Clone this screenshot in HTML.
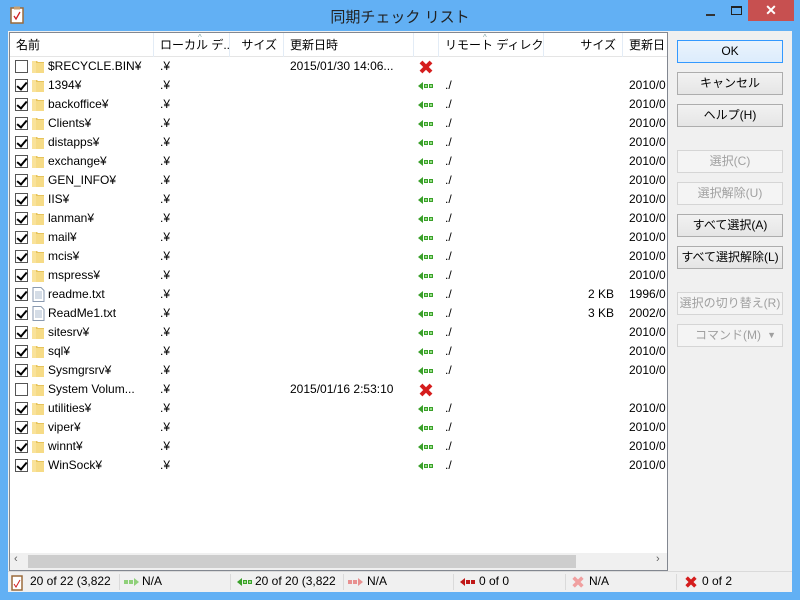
<!DOCTYPE html>
<html><head><meta charset="utf-8"><style>
*{margin:0;padding:0;box-sizing:border-box}
body{width:800px;height:600px;overflow:hidden;background:#62b0f4;font-family:"Liberation Sans","Noto Sans CJK JP",sans-serif;font-size:12px;color:#000;position:relative}
.a{position:absolute;white-space:nowrap}
#client{position:absolute;left:8px;top:31px;width:784px;height:561px;background:#f0f0f0}
#list{position:absolute;left:9px;top:32px;width:659px;height:539px;background:#fff;border:1px solid #828790;overflow:hidden}
.h{position:absolute;top:0;height:24px;line-height:24px;border-right:1px solid #e3ecf6;padding:0 6px;color:#000;white-space:nowrap;overflow:hidden}
.r{position:absolute;left:0;width:659px;height:19px;line-height:19px;white-space:nowrap}
.r span{position:absolute;top:0}
.cb{position:absolute;left:5px;top:3px;width:13px;height:13px;border:1px solid #555;background:#fff}
.cb.k::after{content:"";position:absolute;left:3px;top:0px;width:4px;height:8px;border:solid #000;border-width:0 2px 2px 0;transform:rotate(40deg)}
.fd{position:absolute;left:21px;top:2px;width:15px;height:15px}
.btn{position:absolute;left:677px;width:106px;height:23px;border:1px solid #adadad;background:linear-gradient(#f2f2f2,#e5e5e5);text-align:center;line-height:21px;color:#000;white-space:nowrap}
.btn.d{color:#a0a0a0;border-color:#d5d5d5;background:#f4f4f4}
.st{position:absolute;top:572px;height:19px;line-height:19px;white-space:nowrap}
.sep{position:absolute;top:574px;width:1px;height:16px;background:#dadada}
</style></head><body>
<svg class="a" style="left:10px;top:6px" width="14" height="18" viewBox="0 0 14 18"><rect x="1" y="2" width="12" height="15" fill="#fff" stroke="#9a6a3a" stroke-width="1.5"/><rect x="4" y="0.5" width="6" height="3" fill="#c8a070"/><path d="M4 10 L6 13 L10 6" stroke="#d02020" fill="none" stroke-width="1.3"/></svg>
<div class="a" style="left:0;top:6px;width:800px;text-align:center;font-size:15px;color:#222">同期チェック リスト</div>
<div class="a" style="left:706px;top:14px;width:9px;height:2px;background:#333"></div>
<div class="a" style="left:731px;top:6px;width:11px;height:9px;border:1px solid #222;border-top-width:2px"></div>
<div class="a" style="left:748px;top:0;width:46px;height:21px;background:#c75050;color:#fff;text-align:center;line-height:20px;font-size:14px;font-weight:bold">✕</div>
<div id="client"></div>
<div id="list">
<div class="a" style="left:0;top:0;width:659px;height:24px;border-bottom:1px solid #e5e5e5"></div>
<div class="h" style="left:0;width:144px">名前</div>
<div class="h" style="left:144px;width:76px">ローカル デ...</div>
<div class="h" style="left:220px;width:54px;text-align:right">サイズ</div>
<div class="h" style="left:274px;width:130px">更新日時</div>
<div class="h" style="left:404px;width:25px"></div>
<div class="h" style="left:429px;width:105px">リモート ディレクトリ</div>
<div class="h" style="left:534px;width:79px;text-align:right">サイズ</div>
<div class="h" style="left:613px;width:60px">更新日</div>
<div class="a" style="left:188px;top:0;font-size:8px;color:#8aa">^</div>
<div class="a" style="left:473px;top:0;font-size:8px;color:#8aa">^</div>
<svg width="0" height="0" style="position:absolute"><defs>
<symbol id="f" viewBox="0 0 15 15"><path d="M1 2h5l1 1h6v11H1z" fill="#e6c35c"/><rect x="2" y="4" width="11" height="10" fill="#f6db86"/><rect x="1" y="2" width="4" height="12" fill="#f9e29a"/></symbol>
<symbol id="t" viewBox="0 0 15 15"><path d="M2 0.5h8l3 3v11H2z" fill="#fff" stroke="#8a9ab0"/><path d="M4 5h7M4 7h7M4 9h7M4 11h7" stroke="#a8b8cc"/></symbol>
<symbol id="g" viewBox="0 0 16 8"><path d="M0 4L5 0V8Z" fill="#3aa02a"/><rect x="6" y="2" width="4" height="4" fill="#3aa02a"/><rect x="11" y="2" width="4" height="4" fill="#3aa02a"/><rect x="7" y="3" width="2" height="2" fill="#9be08a"/><rect x="12" y="3" width="2" height="2" fill="#9be08a"/></symbol>
<symbol id="x" viewBox="0 0 16 16"><path d="M3 3L13 13M13 3L3 13" stroke="#d51d1d" stroke-width="4"/></symbol>
</defs></svg>

<div class="r" style="top:24px"><i class="cb"></i><svg class="fd"><use href="#f"/></svg><span style="left:38px">$RECYCLE.BIN¥</span><span style="left:150px">.¥</span><span style="left:280px">2015/01/30 14:06...</span><svg class="a" style="left:408px;top:2px" width="16" height="16"><use href="#x"/></svg></div>
<div class="r" style="top:43px"><i class="cb k"></i><svg class="fd"><use href="#f"/></svg><span style="left:38px">1394¥</span><span style="left:150px">.¥</span><svg class="a" style="left:408px;top:6px" width="16" height="8"><use href="#g"/></svg><span style="left:435px">./</span><span style="left:619px">2010/0</span></div>
<div class="r" style="top:62px"><i class="cb k"></i><svg class="fd"><use href="#f"/></svg><span style="left:38px">backoffice¥</span><span style="left:150px">.¥</span><svg class="a" style="left:408px;top:6px" width="16" height="8"><use href="#g"/></svg><span style="left:435px">./</span><span style="left:619px">2010/0</span></div>
<div class="r" style="top:81px"><i class="cb k"></i><svg class="fd"><use href="#f"/></svg><span style="left:38px">Clients¥</span><span style="left:150px">.¥</span><svg class="a" style="left:408px;top:6px" width="16" height="8"><use href="#g"/></svg><span style="left:435px">./</span><span style="left:619px">2010/0</span></div>
<div class="r" style="top:100px"><i class="cb k"></i><svg class="fd"><use href="#f"/></svg><span style="left:38px">distapps¥</span><span style="left:150px">.¥</span><svg class="a" style="left:408px;top:6px" width="16" height="8"><use href="#g"/></svg><span style="left:435px">./</span><span style="left:619px">2010/0</span></div>
<div class="r" style="top:119px"><i class="cb k"></i><svg class="fd"><use href="#f"/></svg><span style="left:38px">exchange¥</span><span style="left:150px">.¥</span><svg class="a" style="left:408px;top:6px" width="16" height="8"><use href="#g"/></svg><span style="left:435px">./</span><span style="left:619px">2010/0</span></div>
<div class="r" style="top:138px"><i class="cb k"></i><svg class="fd"><use href="#f"/></svg><span style="left:38px">GEN_INFO¥</span><span style="left:150px">.¥</span><svg class="a" style="left:408px;top:6px" width="16" height="8"><use href="#g"/></svg><span style="left:435px">./</span><span style="left:619px">2010/0</span></div>
<div class="r" style="top:157px"><i class="cb k"></i><svg class="fd"><use href="#f"/></svg><span style="left:38px">IIS¥</span><span style="left:150px">.¥</span><svg class="a" style="left:408px;top:6px" width="16" height="8"><use href="#g"/></svg><span style="left:435px">./</span><span style="left:619px">2010/0</span></div>
<div class="r" style="top:176px"><i class="cb k"></i><svg class="fd"><use href="#f"/></svg><span style="left:38px">lanman¥</span><span style="left:150px">.¥</span><svg class="a" style="left:408px;top:6px" width="16" height="8"><use href="#g"/></svg><span style="left:435px">./</span><span style="left:619px">2010/0</span></div>
<div class="r" style="top:195px"><i class="cb k"></i><svg class="fd"><use href="#f"/></svg><span style="left:38px">mail¥</span><span style="left:150px">.¥</span><svg class="a" style="left:408px;top:6px" width="16" height="8"><use href="#g"/></svg><span style="left:435px">./</span><span style="left:619px">2010/0</span></div>
<div class="r" style="top:214px"><i class="cb k"></i><svg class="fd"><use href="#f"/></svg><span style="left:38px">mcis¥</span><span style="left:150px">.¥</span><svg class="a" style="left:408px;top:6px" width="16" height="8"><use href="#g"/></svg><span style="left:435px">./</span><span style="left:619px">2010/0</span></div>
<div class="r" style="top:233px"><i class="cb k"></i><svg class="fd"><use href="#f"/></svg><span style="left:38px">mspress¥</span><span style="left:150px">.¥</span><svg class="a" style="left:408px;top:6px" width="16" height="8"><use href="#g"/></svg><span style="left:435px">./</span><span style="left:619px">2010/0</span></div>
<div class="r" style="top:252px"><i class="cb k"></i><svg class="fd"><use href="#t"/></svg><span style="left:38px">readme.txt</span><span style="left:150px">.¥</span><svg class="a" style="left:408px;top:6px" width="16" height="8"><use href="#g"/></svg><span style="left:435px">./</span><span style="left:578px">2 KB</span><span style="left:619px">1996/0</span></div>
<div class="r" style="top:271px"><i class="cb k"></i><svg class="fd"><use href="#t"/></svg><span style="left:38px">ReadMe1.txt</span><span style="left:150px">.¥</span><svg class="a" style="left:408px;top:6px" width="16" height="8"><use href="#g"/></svg><span style="left:435px">./</span><span style="left:578px">3 KB</span><span style="left:619px">2002/0</span></div>
<div class="r" style="top:290px"><i class="cb k"></i><svg class="fd"><use href="#f"/></svg><span style="left:38px">sitesrv¥</span><span style="left:150px">.¥</span><svg class="a" style="left:408px;top:6px" width="16" height="8"><use href="#g"/></svg><span style="left:435px">./</span><span style="left:619px">2010/0</span></div>
<div class="r" style="top:309px"><i class="cb k"></i><svg class="fd"><use href="#f"/></svg><span style="left:38px">sql¥</span><span style="left:150px">.¥</span><svg class="a" style="left:408px;top:6px" width="16" height="8"><use href="#g"/></svg><span style="left:435px">./</span><span style="left:619px">2010/0</span></div>
<div class="r" style="top:328px"><i class="cb k"></i><svg class="fd"><use href="#f"/></svg><span style="left:38px">Sysmgrsrv¥</span><span style="left:150px">.¥</span><svg class="a" style="left:408px;top:6px" width="16" height="8"><use href="#g"/></svg><span style="left:435px">./</span><span style="left:619px">2010/0</span></div>
<div class="r" style="top:347px"><i class="cb"></i><svg class="fd"><use href="#f"/></svg><span style="left:38px">System Volum...</span><span style="left:150px">.¥</span><span style="left:280px">2015/01/16 2:53:10</span><svg class="a" style="left:408px;top:2px" width="16" height="16"><use href="#x"/></svg></div>
<div class="r" style="top:366px"><i class="cb k"></i><svg class="fd"><use href="#f"/></svg><span style="left:38px">utilities¥</span><span style="left:150px">.¥</span><svg class="a" style="left:408px;top:6px" width="16" height="8"><use href="#g"/></svg><span style="left:435px">./</span><span style="left:619px">2010/0</span></div>
<div class="r" style="top:385px"><i class="cb k"></i><svg class="fd"><use href="#f"/></svg><span style="left:38px">viper¥</span><span style="left:150px">.¥</span><svg class="a" style="left:408px;top:6px" width="16" height="8"><use href="#g"/></svg><span style="left:435px">./</span><span style="left:619px">2010/0</span></div>
<div class="r" style="top:404px"><i class="cb k"></i><svg class="fd"><use href="#f"/></svg><span style="left:38px">winnt¥</span><span style="left:150px">.¥</span><svg class="a" style="left:408px;top:6px" width="16" height="8"><use href="#g"/></svg><span style="left:435px">./</span><span style="left:619px">2010/0</span></div>
<div class="r" style="top:423px"><i class="cb k"></i><svg class="fd"><use href="#f"/></svg><span style="left:38px">WinSock¥</span><span style="left:150px">.¥</span><svg class="a" style="left:408px;top:6px" width="16" height="8"><use href="#g"/></svg><span style="left:435px">./</span><span style="left:619px">2010/0</span></div>

<div class="a" style="left:0;top:520px;width:657px;height:17px;background:#f0f0f0"></div>
<div class="a" style="left:18px;top:522px;width:548px;height:13px;background:#cdcdcd"></div>
<div class="a" style="left:4px;top:520px;color:#606060;font-size:11px">&lsaquo;</div>
<div class="a" style="left:646px;top:520px;color:#606060;font-size:11px">&rsaquo;</div>
</div>

<div class="btn" style="top:40px;border-color:#3399ff;background:linear-gradient(#eaf3fc,#dcecfc)">OK</div>
<div class="btn" style="top:72px">キャンセル</div>
<div class="btn" style="top:104px">ヘルプ(H)</div>
<div class="btn d" style="top:150px">選択(C)</div>
<div class="btn d" style="top:182px">選択解除(U)</div>
<div class="btn" style="top:214px">すべて選択(A)</div>
<div class="btn" style="top:246px">すべて選択解除(L)</div>
<div class="btn d" style="top:292px">選択の切り替え(R)</div>
<div class="btn d" style="top:324px;text-align:left;padding-left:17px">コマンド(M)<span style="position:absolute;right:6px;top:0;font-size:9px">▼</span></div>

<div class="a" style="left:8px;top:571px;width:784px;height:1px;background:#dadada"></div>
<svg class="a" style="left:11px;top:574px" width="12" height="17"><rect x="1" y="2" width="10" height="14" fill="#fff" stroke="#9a6a3a" stroke-width="1.5"/><path d="M3 10L5 13L9 6" stroke="#d02020" fill="none"/></svg>
<div class="st" style="left:30px">20 of 22 (3,822</div>
<div class="sep" style="left:119px"></div>
<svg class="a" style="left:124px;top:578px" width="16" height="8"><path d="M0 2h4v4H0zM5 2h4v4H5z" fill="#8fd07a"/><path d="M10 0L15 4L10 8Z" fill="#8fd07a"/></svg>
<div class="st" style="left:142px">N/A</div>
<div class="sep" style="left:230px"></div>
<svg class="a" style="left:237px;top:578px" width="16" height="8"><use href="#g"/></svg>
<div class="st" style="left:255px">20 of 20 (3,822</div>
<div class="sep" style="left:343px"></div>
<svg class="a" style="left:348px;top:578px" width="16" height="8"><path d="M0 2h4v4H0zM5 2h4v4H5z" fill="#e89090"/><path d="M10 0L15 4L10 8Z" fill="#e89090"/></svg>
<div class="st" style="left:367px">N/A</div>
<div class="sep" style="left:453px"></div>
<svg class="a" style="left:460px;top:578px" width="16" height="8"><path d="M0 4L5 0V8Z" fill="#c01818"/><rect x="6" y="2" width="4" height="4" fill="#c01818"/><rect x="11" y="2" width="4" height="4" fill="#c01818"/></svg>
<div class="st" style="left:479px">0 of 0</div>
<div class="sep" style="left:565px"></div>
<svg class="a" style="left:571px;top:575px" width="14" height="14" viewBox="0 0 16 16"><path d="M3 3L13 13M13 3L3 13" stroke="#f0a0a0" stroke-width="4"/></svg>
<div class="st" style="left:589px">N/A</div>
<div class="sep" style="left:676px"></div>
<svg class="a" style="left:684px;top:575px" width="14" height="14" viewBox="0 0 16 16"><use href="#x"/></svg>
<div class="st" style="left:702px">0 of 2</div>
</body></html>
